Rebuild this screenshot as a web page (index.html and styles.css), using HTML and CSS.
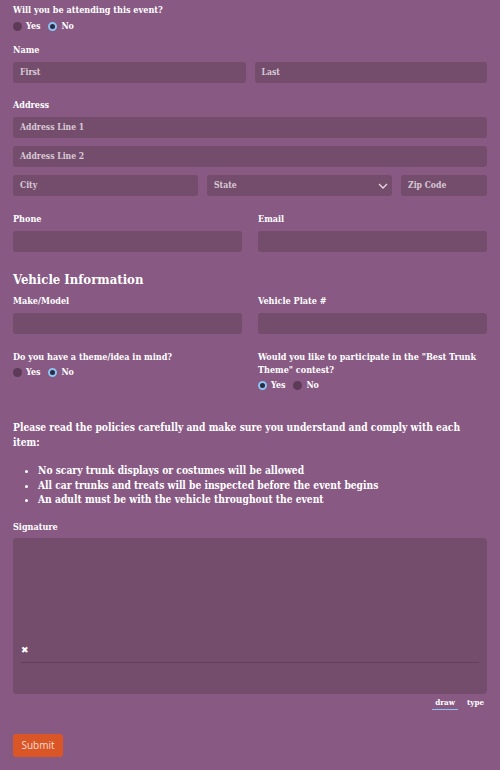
FILE: index.html
```html
<!DOCTYPE html>
<html lang="en">
<head>
    <meta charset="UTF-8">
    <meta name="viewport" content="width=device-width, initial-scale=1.0">
    <title>Trunk or Treat Registration</title>
    <link rel="stylesheet" href="styles.css">
</head>
<body>
    <form class="form">
        <div class="field">
            <div class="label">Will you be attending this event?</div>
            <div class="radios">
                <label class="radio"><span class="dot"></span>Yes</label>
                <label class="radio"><span class="dot on"></span>No</label>
            </div>
        </div>

        <div class="field name-field">
            <div class="label">Name</div>
            <div class="row two">
                <div class="input">First</div>
                <div class="input">Last</div>
            </div>
        </div>

        <div class="field address-field">
            <div class="label">Address</div>
            <div class="input">Address Line 1</div>
            <div class="input">Address Line 2</div>
            <div class="row three">
                <div class="input">City</div>
                <div class="input select">State
                    <svg class="chevron" width="10" height="6" viewBox="0 0 10 6"><path d="M1 1l4 4 4-4" fill="none" stroke="#e6d8e4" stroke-width="1.3"/></svg>
                </div>
                <div class="input">Zip Code</div>
            </div>
        </div>

        <div class="row cols">
            <div class="field">
                <div class="label">Phone</div>
                <div class="input"></div>
            </div>
            <div class="field">
                <div class="label">Email</div>
                <div class="input"></div>
            </div>
        </div>

        <h2 class="section">Vehicle Information</h2>

        <div class="row cols">
            <div class="field">
                <div class="label">Make/Model</div>
                <div class="input"></div>
            </div>
            <div class="field">
                <div class="label">Vehicle Plate #</div>
                <div class="input"></div>
            </div>
        </div>

        <div class="row cols questions">
            <div class="field">
                <div class="label">Do you have a theme/idea in mind?</div>
                <div class="radios">
                    <label class="radio"><span class="dot"></span>Yes</label>
                    <label class="radio"><span class="dot on"></span>No</label>
                </div>
            </div>
            <div class="field">
                <div class="label">Would you like to participate in the "Best Trunk<br>Theme" contest?</div>
                <div class="radios">
                    <label class="radio"><span class="dot on"></span>Yes</label>
                    <label class="radio"><span class="dot"></span>No</label>
                </div>
            </div>
        </div>

        <div class="policies">
            <p>Please read the policies carefully and make sure you understand and comply with each item:</p>
            <ul>
                <li>No scary trunk displays or costumes will be allowed</li>
                <li>All car trunks and treats will be inspected before the event begins</li>
                <li>An adult must be with the vehicle throughout the event</li>
            </ul>
        </div>

        <div class="field">
            <div class="label">Signature</div>
            <div class="signature">
                <span class="sig-x">&#10006;</span>
                <div class="sig-line"></div>
            </div>
            <div class="sig-tabs">
                <span class="tab active">draw</span>
                <span class="tab">type</span>
            </div>
        </div>

        <button type="button" class="submit">Submit</button>
    </form>
</body>
</html>
```

FILE: styles.css
```css
body {
    margin: 0;
    background-color: #875983;
    color: #ffffff;
    font-family: "DejaVu Serif", serif;
    font-stretch: condensed;
}
.form {
    padding: 4px 13px 13px;
}
.label {
    font-size: 9px;
    font-weight: bold;
    line-height: 13px;
    margin-bottom: 5px;
}
.field {
    margin-bottom: 13px;
}
.radios {
    display: flex;
    gap: 8px;
    font-size: 8.8px;
    font-weight: bold;
    margin-top: -1px;
}
.radio {
    display: flex;
    align-items: center;
    gap: 4px;
}
.dot {
    width: 9px;
    height: 9px;
    border-radius: 50%;
    background: #5d3b58;
    box-sizing: border-box;
}
.dot.on {
    background: #2a2a40;
    border: 2.5px solid #8dc3f2;
}
.input {
    height: 21px;
    line-height: 21px;
    border-radius: 3px;
    background: #744d6d;
    color: #d8c9d5;
    font-size: 8.6px;
    font-weight: bold;
    padding: 0 7px;
    box-sizing: border-box;
}
.row {
    display: grid;
    gap: 9px;
}
.two {
    grid-template-columns: 1fr 1fr;
}
.three {
    grid-template-columns: 185px 185px 1fr;
    gap: 9px;
}
.cols {
    grid-template-columns: 1fr 1fr;
    gap: 16px;
}
.cols .field {
    margin-bottom: 17px;
}
.address-field .input {
    margin-bottom: 8px;
}
.address-field .row .input {
    margin-bottom: 0;
}
.address-field {
    margin-bottom: 17px;
}
.name-field {
    margin-bottom: 16px;
}
.select {
    position: relative;
}
.chevron {
    position: absolute;
    right: 4px;
    top: 8px;
}
.section {
    font-size: 13px;
    margin: 3px 0 7px;
    line-height: 16px;
}
.questions .label {
    margin-bottom: 4px;
}
.questions .field {
    margin-bottom: 30px;
}
.policies {
    font-size: 10.2px;
    font-weight: bold;
    line-height: 14.5px;
    margin-bottom: 14px;
}
.policies p {
    margin: 0 0 14px;
}
.policies ul {
    margin: 0;
    padding-left: 25px;
}
.signature {
    position: relative;
    height: 156px;
    border-radius: 4px;
    background: #744d6d;
    margin-top: -1px;
}
.sig-x {
    position: absolute;
    left: 8px;
    top: 107px;
    font-size: 9px;
}
.sig-line {
    position: absolute;
    left: 8px;
    right: 8px;
    top: 124px;
    border-top: 1px solid #644060;
}
.sig-tabs {
    display: flex;
    justify-content: flex-end;
    gap: 6px;
    font-size: 8px;
    font-weight: bold;
    margin-top: 3px;
}
.tab {
    padding: 0 3px 2px;
}
.tab.active {
    border-bottom: 1.5px solid #8dc3f2;
}
.submit {
    margin-top: 11px;
    width: 50px;
    height: 23px;
    border: 0;
    border-radius: 3px;
    background: #db5627;
    color: #f6dcd0;
    font-family: "Liberation Sans Narrow", "Open Sans", sans-serif;
    font-size: 10px;
}
```
